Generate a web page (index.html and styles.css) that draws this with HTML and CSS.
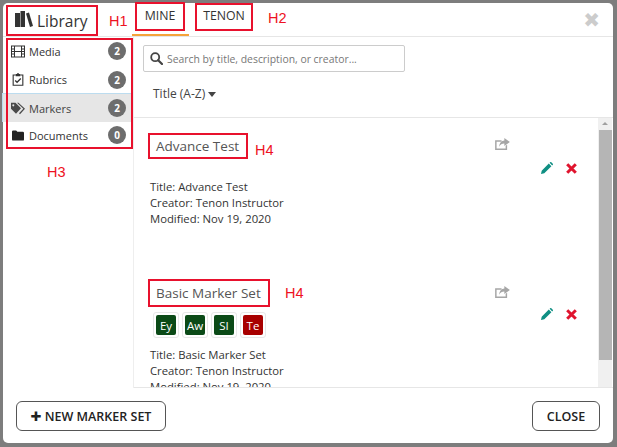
FILE: index.html
```html
<!DOCTYPE html>
<html lang="en">
<head>
<meta charset="utf-8">
<title>Library</title>
<link rel="stylesheet" href="styles.css">
</head>
<body>
<div class="modal">
  <header class="top">
    <h1 class="lib-title mark">
      <svg class="lib-icon" viewBox="0 0 18 16"><path d="M0 2h5v14H0zM5.500 0h4.500v16h-4.500z" fill="#333"/><path d="M11 2.500l3-1 4 13.500-3 1z" fill="#333"/></svg>
      Library
    </h1>
    <span class="anno a-h1">H1</span>
    <nav class="tabs">
      <div class="tab active"><h2 class="mark tab-mine">MINE</h2></div>
      <div class="tab"><h2 class="mark tab-tenon">TENON</h2></div>
      <span class="anno a-h2">H2</span>
    </nav>
    <button class="x" aria-label="Close">✖</button>
  </header>
  <div class="middle">
    <aside class="side">
      <ul class="menu">
        <li class="item first">
          <svg class="ico" viewBox="0 0 14 12"><path fill="#333" fill-rule="evenodd" d="M0 0h14v12H0zM1 1v2h2V1zM1 4v1.500h2V4zM1 6.500V8h2V6.500zM1 9v2h2V9zM4 1v4.500h6V1zM4 6.500V11h6V6.500zM11 1v2h2V1zM11 4v1.500h2V4zM11 6.500V8h2V6.500zM11 9v2h2V9z"/></svg>
          <span class="label">Media</span><span class="count">2</span>
        </li>
        <li class="item second-row">
          <svg class="ico" viewBox="0 0 12 14"><path fill="none" stroke="#333" stroke-width="1.200" d="M3.500 2.200H.8v11h10.400v-11H8.500"/><path fill="#333" d="M3.500 1h1.500a1 1 0 0 1 2 0h1.500v2.500h-5z"/><path fill="none" stroke="#333" stroke-width="1.400" d="M3 8l2 2 4-4"/></svg>
          <span class="label">Rubrics</span><span class="count">2</span>
        </li>
        <li class="item selected">
          <svg class="ico" viewBox="0 0 14 11.500"><path fill="#4a4a4a" fill-rule="evenodd" d="M0 0h4.500l5.500 5.500-5 5.500-5-5zM2.300 1.400a1 1 0 1 0 .01 0z"/><path fill="#4a4a4a" d="M6 0h1.500l6.500 6-5 5.500-1-1 4.300-4.500z"/></svg>
          <span class="label">Markers</span><span class="count">2</span>
        </li>
        <li class="item">
          <svg class="ico ico-folder" viewBox="0 0 13 11"><path fill="#222" d="M0 1.300A1.300 1.300 0 0 1 1.300 0h3.200l1.300 1.500h5.900A1.300 1.300 0 0 1 13 2.800v6.900A1.300 1.300 0 0 1 11.700 11H1.300A1.300 1.300 0 0 1 0 9.700z"/></svg>
          <span class="label">Documents</span><span class="count">0</span>
        </li>
      </ul>
      <span class="anno a-h3">H3</span>
    </aside>
    <main class="main">
      <div class="filters">
        <div class="search">
          <svg class="search-ico" viewBox="0 0 13 13"><circle cx="5.200" cy="5.200" r="4" fill="none" stroke="#444" stroke-width="1.800"/><path d="M8.200 8.200l3.800 3.800" stroke="#444" stroke-width="2.200" stroke-linecap="round"/></svg>
          <span class="placeholder">Search by title, description, or creator...</span>
        </div>
        <div class="sort">Title (A-Z)<span class="caret"></span></div>
      </div>
      <div class="list">
        <div class="scroll-content">
          <article class="card">
            <div class="card-head">
              <h4 class="mark card-title">Advance Test</h4><span class="anno a-h4">H4</span>
            </div>
            <dl class="meta">
              <div>Title: Advance Test</div>
              <div>Creator: Tenon Instructor</div>
              <div>Modified: Nov 19, 2020</div>
            </dl>
            <svg class="share" viewBox="0 0 16 13"><path fill="#a6a6a6" d="M0 2.500h7v1.500H1.600v7.400h9.800V8.500L13 7.200V13H0z"/><path fill="#a6a6a6" d="M10 0l6 4.300-6 4.300V6C7.500 6 5.500 7 4.500 9.500 4.500 5.500 7 2.800 10 2.600z"/></svg>
            <svg class="pencil" viewBox="0 0 12 12"><path fill="#0f8f83" d="M0 12l.7-3.300L7.800 1.600l2.600 2.600-7.100 7.100zM8.600.8l.6-.6a.8.8 0 0 1 1.100 0l1.500 1.500a.8.8 0 0 1 0 1.100l-.6.600z"/></svg>
            <svg class="del" viewBox="0 0 11 11"><path stroke="#e0142e" stroke-width="3" d="M1.200 1.200l8.600 8.600M9.800 1.200l-8.600 8.600"/></svg>
          </article>
          <article class="card second">
            <div class="card-head">
              <h4 class="mark card-title">Basic Marker Set</h4><span class="anno a-h4b">H4</span>
            </div>
            <div class="tags">
              <span class="tag"><span class="tag-in green">Ey</span></span>
              <span class="tag"><span class="tag-in green">Aw</span></span>
              <span class="tag"><span class="tag-in green">SI</span></span>
              <span class="tag"><span class="tag-in red">Te</span></span>
            </div>
            <dl class="meta">
              <div>Title: Basic Marker Set</div>
              <div>Creator: Tenon Instructor</div>
              <div>Modified: Nov 19, 2020</div>
            </dl>
            <svg class="share" viewBox="0 0 16 13"><path fill="#a6a6a6" d="M0 2.500h7v1.500H1.600v7.400h9.800V8.500L13 7.200V13H0z"/><path fill="#a6a6a6" d="M10 0l6 4.300-6 4.300V6C7.500 6 5.500 7 4.500 9.500 4.500 5.500 7 2.800 10 2.600z"/></svg>
            <svg class="pencil" viewBox="0 0 12 12"><path fill="#0f8f83" d="M0 12l.7-3.300L7.800 1.600l2.600 2.600-7.100 7.100zM8.600.8l.6-.6a.8.8 0 0 1 1.100 0l1.500 1.500a.8.8 0 0 1 0 1.100l-.6.600z"/></svg>
            <svg class="del" viewBox="0 0 11 11"><path stroke="#e0142e" stroke-width="3" d="M1.200 1.200l8.600 8.600M9.800 1.200l-8.600 8.600"/></svg>
          </article>
        </div>
        <div class="scrollbar">
          <span class="arrow"></span>
          <span class="thumb"></span>
        </div>
      </div>
    </main>
  </div>
  <footer class="foot">
    <button class="btn btn-new"><span class="plus">✚</span> NEW MARKER SET</button>
    <button class="btn btn-close">CLOSE</button>
  </footer>
</div>
</body>
</html>
```
FILE: styles.css
```css
* { box-sizing: border-box; }
html, body { margin: 0; height: 100%; }
body {
  width: 617px; height: 447px; overflow: hidden;
  background: #7d7d7d;
  padding: 3px 4px 4px 3px;
  font-family: "Open Sans", sans-serif;
  color: #333;
}
.modal {
  height: 440px; background: #fff; border-radius: 5px;
  display: flex; flex-direction: column;
}
.mark { border: 2px solid #e8112d; margin: 0; }
.anno { color: #ee1122; font-size: 14.500px; font-family: "Liberation Sans", sans-serif; position: absolute; line-height: 20px; }
.top {
  height: 34px; flex: none; border-bottom: 1px solid #e6e6e6;
  display: flex; position: relative;
}
.lib-title {
  width: 92px; height: 31px; margin: 2px 0 0 3px;
  display: flex; align-items: center; gap: 4px; padding-left: 7px;
  font-size: 15.500px; font-weight: 400; color: #333;
}
.lib-icon { width: 18px; height: 16px; margin-bottom: 3px; }
.a-h1 { left: 106px; top: 8px; }
.tabs { display: flex; margin-left: 34px; position: relative; }
.tab { width: 57px; height: 33px; position: relative; margin-right: 2px; }
.tab.active { border-bottom: 2px solid #f5a33a; }
.tab h2 { font-size: 12.300px; font-weight: 400; color: #333; position: absolute; text-align: center; }
.tab-mine { left: 3px; top: -1px; width: 50px; height: 29px; line-height: 23px; }
.tab-tenon { left: 4px; top: 0; width: 58px; height: 28px; line-height: 21px; }
.a-h2 { left: 136px; top: 5px; }
.x { position: absolute; right: 13px; top: 7px; border: 0; background: none; padding: 0; font-size: 20px; line-height: 20px; color: #ccc; font-family: "DejaVu Sans", sans-serif; }
.middle { flex: 1; display: flex; min-height: 0; }
.side { width: 131px; flex: none; border-right: 1px solid #eee; position: relative; }
.menu { list-style: none; width: 127px; height: 111px; margin: 1px 0 0 3px; padding: 0; position: relative; }
.menu::after { content: ""; position: absolute; inset: 0; border: 2px solid #e8112d; }
.item { height: 26px; display: flex; align-items: center; padding: 0 7px 0 5px; font-size: 11px; color: #333; }
.item.second-row { height: 29px; padding-top: 2px; }
.item.selected { background: #e6e6e6; border-top: 1px solid #bcdcef; border-left: 1px solid #bcdcef; height: 29px; margin-left: -4px; padding-left: 8px; color: #444; }
.ico { width: 14px; height: 13px; flex: none; margin-right: 4px; }
.ico-folder { width: 12px; margin: 0 5px 0 1px; }
.label { flex: 1; }
.count { width: 18px; height: 18px; border-radius: 50%; background: #6d6d6d; color: #fff; font-size: 10px; font-weight: 700; display: flex; align-items: center; justify-content: center; }
.a-h3 { left: 44px; top: 125px; }
.main { flex: 1; display: flex; flex-direction: column; min-width: 0; }
.filters { height: 81px; flex: none; padding: 8px 0 0 9px; border-bottom: 1px solid #e6e6e6; }
.search { width: 262px; height: 27px; border: 1px solid #ccc; border-radius: 2px; display: flex; align-items: center; padding-left: 6px; gap: 4px; }
.search-ico { width: 13px; height: 13px; }
.placeholder { font-size: 10.400px; color: #777; white-space: nowrap; }
.sort { margin: 13px 0 0 10px; font-size: 12px; color: #444; display: flex; align-items: center; line-height: 18px; }
.caret { width: 0; height: 0; border: 4px solid transparent; border-top: 5px solid #444; border-bottom: 0; margin-left: 3px; }
.list { flex: 1; min-height: 0; display: flex; border-bottom: 1px solid #e6e6e6; }
.scroll-content { flex: 1; overflow: hidden; min-width: 0; }
.card { position: relative; height: 148px; padding: 15px 0 0 14px; }
.card.second { padding-top: 13px; }
.card-head { height: 28px; display: flex; position: relative; }
.card-title { height: 26px; font-size: 13.500px; font-weight: 400; color: #555; line-height: 22px; padding: 0 7px 0 6px; white-space: nowrap; }
.second .card-title { height: 28px; line-height: 24px; }
.a-h4 { left: 107px; top: 7px; }
.a-h4b { left: 137px; top: 4px; }
.meta { margin: 0 0 0 2px; padding-top: 18px; font-size: 11.300px; line-height: 16px; color: #333; }
.second .meta { padding-top: 9px; }
.tags { display: flex; gap: 3px; margin: 5px 0 0 5px; }
.tag { width: 26px; height: 26px; border: 1px solid #e8e8e8; border-radius: 3px; padding: 2px; display: flex; }
.tag-in { flex: 1; color: #fff; font-size: 11.500px; display: flex; align-items: center; justify-content: center; border-radius: 2px; }
.green { background: #0b4a17; }
.red { background: #a80000; }
.share { position: absolute; left: 361px; top: 20px; width: 15px; height: 12px; }
.pencil { position: absolute; left: 407px; top: 44px; width: 12px; height: 12px; }
.del { position: absolute; left: 432px; top: 45px; width: 11px; height: 11px; }
.second .share { top: 20px; }
.second .pencil { top: 42px; }
.second .del { top: 43px; }
.scrollbar { width: 14px; flex: none; background: #f0f0f0; margin-right: 1px; position: relative; padding-top: 12px; }
.arrow { position: absolute; top: 4px; left: 4px; width: 0; height: 0; border: 3px solid transparent; border-bottom: 3px solid #a0a0a0; border-top: 0; }
.thumb { display: block; margin-left: 1px; height: 230px; background: #b5b5b5; }
.foot { height: 55px; flex: none; display: flex; justify-content: space-between; align-items: center; padding: 1px 13px 0; }
.btn { height: 30px; background: #fff; border: 1px solid #555; border-radius: 6px; font-family: "Open Sans", sans-serif; font-weight: 600; font-size: 12.500px; color: #222; padding: 0; }
.btn-new { width: 150px; }
.btn-close { width: 68px; }
.plus { font-family: "DejaVu Sans", sans-serif; font-size: 13px; }
```
